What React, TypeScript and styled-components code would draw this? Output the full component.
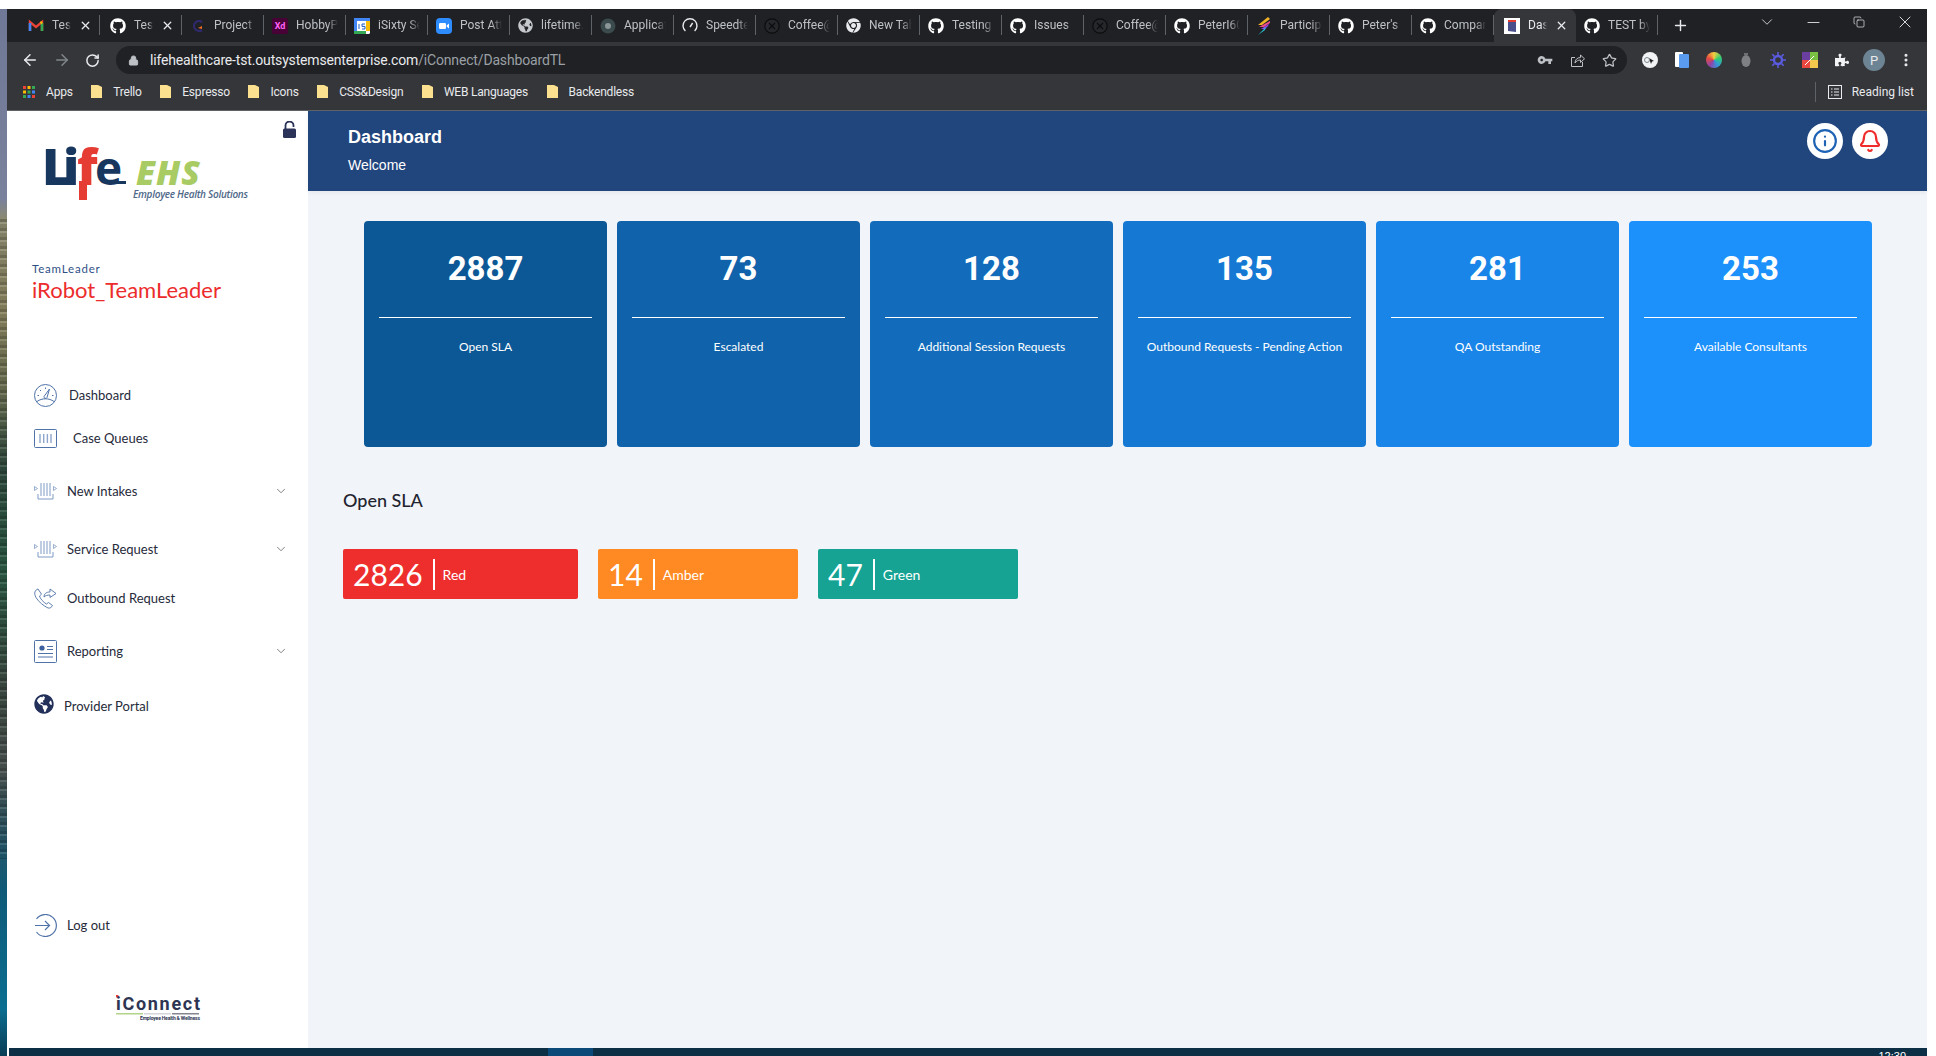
import React from "react";
import styled, { createGlobalStyle } from "styled-components";
import {
  ArrowLeft,
  ArrowRight,
  Bell,
  ChevronDown,
  Copy,
  Info,
  Lock,
  Minus,
  MoreVertical,
  Plus,
  RotateCw,
  Star,
  X,
} from "lucide-react";
import { FaChrome, FaGithub, FaGlobeAmericas, FaPuzzlePiece } from "react-icons/fa";
import { MdVpnKey } from "react-icons/md";

const ICON = "#4f72a8";

const tabs = [
  { title: "Test", icon: "gmail", close: true },
  { title: "Test", icon: "github", close: true },
  { title: "Project", icon: "project" },
  { title: "HobbyP", icon: "xd" },
  { title: "iSixty Se", icon: "calendar" },
  { title: "Post Att", icon: "zoom" },
  { title: "lifetime.", icon: "globe" },
  { title: "Applicat", icon: "app" },
  { title: "Speedte", icon: "speed" },
  { title: "Coffee@", icon: "coffee" },
  { title: "New Tab", icon: "chrome" },
  { title: "Testing", icon: "github" },
  { title: "Issues", icon: "github" },
  { title: "Coffee@", icon: "coffee" },
  { title: "PeterI60", icon: "github" },
  { title: "Participa", icon: "bolt" },
  { title: "Peter's", icon: "github" },
  { title: "Compar", icon: "github" },
  { title: "Dash", icon: "book", close: true, active: true },
  { title: "TEST by", icon: "github" },
];

const bookmarks = ["Trello", "Espresso", "Icons", "CSS&Design", "WEB Languages", "Backendless"];

const stats = [
  { value: "2887", label: "Open SLA", color: "#0c5896" },
  { value: "73", label: "Escalated", color: "#1062aa" },
  { value: "128", label: "Additional Session Requests", color: "#126cbb" },
  { value: "135", label: "Outbound Requests - Pending Action", color: "#1579d3" },
  { value: "281", label: "QA Outstanding", color: "#1a85e8" },
  { value: "253", label: "Available Consultants", color: "#1c90fb" },
];

const slas = [
  { value: "2826", label: "Red", color: "#ed2e2d", width: 235 },
  { value: "14", label: "Amber", color: "#ff8922", width: 200 },
  { value: "47", label: "Green", color: "#16a394", width: 200 },
];

const TabIcon = ({ kind }: { kind: string }) => {
  switch (kind) {
    case "github":
      return <FaGithub size={16} color="#fff" />;
    case "chrome":
      return <FaChrome size={15} color="#e8eaed" />;
    case "globe":
      return <FaGlobeAmericas size={15} color="#c4c7cb" />;
    case "gmail":
      return (
        <svg width="16" height="16" viewBox="0 0 16 16" fill="none">
          <path d="M2 13V4l6 5 6-5v9" stroke="#e94335" strokeWidth="2.4" />
          <path d="M2 13V5" stroke="#4285f4" strokeWidth="2.6" />
          <path d="M14 13V5" stroke="#34a853" strokeWidth="2.6" />
          <path d="M14 4l-1.5 1.2" stroke="#fbbc04" strokeWidth="2.4" />
        </svg>
      );
    case "project":
      return (
        <svg width="16" height="16" viewBox="0 0 16 16" fill="none">
          <path d="M12 4a5 5 0 1 0 0 8" stroke="#2f2a6e" strokeWidth="2.2" />
          <path d="M8 10l4-2v3z" fill="#f26b21" />
        </svg>
      );
    case "xd":
      return <XdMark>Xd</XdMark>;
    case "calendar":
      return (
        <svg width="16" height="16" viewBox="0 0 16 16">
          <rect width="16" height="16" rx="1.5" fill="#fff" />
          <path d="M0 0h16v3H0z" fill="#4285f4" />
          <path d="M0 13h12v3H0z" fill="#34a853" />
          <path d="M12 3h4v10h-4z" fill="#fbbc04" />
          <path d="M0 3h3v10H0z" fill="#4285f4" />
          <path d="M5 6v5M8 6h3M8 6v2.4h3V11H8" stroke="#1a5fc8" strokeWidth="1" fill="none" />
        </svg>
      );
    case "zoom":
      return (
        <svg width="16" height="16" viewBox="0 0 16 16">
          <rect width="16" height="16" rx="4" fill="#2d8cff" />
          <rect x="3" y="5" width="7" height="6" rx="1.2" fill="#fff" />
          <path d="M10.6 7.4L13 5.6v4.8l-2.4-1.8z" fill="#fff" />
        </svg>
      );
    case "app":
      return (
        <svg width="16" height="16" viewBox="0 0 16 16">
          <circle cx="8" cy="8" r="7.5" fill="#3b4a4c" />
          <circle cx="8" cy="8" r="3" fill="#8a9698" />
        </svg>
      );
    case "speed":
      return (
        <svg width="16" height="16" viewBox="0 0 16 16" fill="none" stroke="#e8eaed" strokeWidth="1.4">
          <path d="M3.4 13a7 7 0 1 1 9.2 0" />
          <path d="M8 9l2.6-4" />
        </svg>
      );
    case "coffee":
      return (
        <svg width="16" height="16" viewBox="0 0 16 16" fill="none" stroke="#0b0c0d" strokeWidth="1.2">
          <circle cx="8" cy="8" r="7.2" fill="#25272a" />
          <path d="M5 5l6 6M11 5l-6 6" stroke="#0b0c0d" />
        </svg>
      );
    case "bolt":
      return (
        <svg width="16" height="18" viewBox="0 0 16 18">
          <path d="M12 0L2 8h4l8-6z" fill="#f0b429" />
          <path d="M14 4L3 10h5l6-4z" fill="#ec4a8b" />
          <path d="M13 7L5 12h4l3-3z" fill="#8d4bf0" />
          <path d="M10 10L2 18l7-5z" fill="#27c4d8" />
        </svg>
      );
    case "book":
      return (
        <svg width="16" height="16" viewBox="0 0 16 16">
          <rect width="16" height="16" fill="#fff" />
          <path d="M4 2h8v2H4z" fill="#e53b33" />
          <path d="M4 4h8v10l-8-1z" fill="#4a4f8c" />
        </svg>
      );
    default:
      return null;
  }
};

const Logo = () => (
  <LogoSvg viewBox="0 0 210 56" aria-label="Life EHS">
    <rect x="33" y="34" width="8" height="19" fill="#e53d33" />
    <rect x="60" y="34" width="20" height="3" fill="#17375e" />
    <text x="-4" y="38" fontFamily="Open Sans" fontWeight="800" fontSize="50" fill="#17375e">
      L<tspan dx="-8">i</tspan>
      <tspan dx="-2.5" fill="#e53d33">f</tspan>
      <tspan dx="-2.5" fontWeight="700" fontSize="46">e</tspan>
    </text>
    <text x="90" y="38" fontFamily="Open Sans" fontWeight="800" fontStyle="italic" fontSize="34" fill="#a9cb63" textLength="64">EHS</text>
    <text x="87" y="51" fontFamily="Open Sans" fontWeight="600" fontStyle="italic" fontSize="10" fill="#4e6788" textLength="115">Employee Health Solutions</text>
  </LogoSvg>
);

const IConnectLogo = () => (
  <FooterLogo viewBox="0 0 86 26" aria-label="iConnect">
    <rect x="0" y="0" width="2.4" height="2.4" fill="#e53d33" />
    <text x="0" y="15" fontFamily="Roboto" fontWeight="700" fontSize="18" fill="#2d3553" textLength="84">iConnect</text>
    <rect x="0" y="18" width="27" height="1.5" fill="#b2d48a" />
    <rect x="28" y="18" width="27" height="1.5" fill="#d5d6dc" />
    <rect x="56" y="18" width="27" height="1.5" fill="#85868f" />
    <text x="24" y="24.5" fontFamily="Roboto" fontWeight="700" fontSize="5" fill="#2d3553" textLength="60">Employee Health &amp; Wellness</text>
  </FooterLogo>
);

const UnlockedIcon = () => (
  <svg width="13" height="17" viewBox="0 0 13 17" fill="none">
    <path d="M2.500 8V4.500a4 4 0 0 1 8 0V6" stroke="#2b3359" strokeWidth="1.800" />
    <rect x="0" y="7.500" width="13" height="9.500" rx="1.500" fill="#2b3359" />
  </svg>
);

const GaugeIcon = () => (
  <svg width="23" height="23" viewBox="0 0 23 23" fill="none" stroke={ICON} strokeWidth="1">
    <circle cx="11.5" cy="11.5" r="11" />
    <path d="M3 17.5c5-3.6 12-3.6 17 0" />
    <path d="M10 12.5L15.5 5l-2.5 8.5a1.6 1.6 0 0 1-3-1z" />
    <path d="M3.5 11.5h1.5M6 6l1 1M11.5 3.5V5M18 11.5h1.5" />
  </svg>
);

const QueueIcon = () => (
  <svg width="23" height="19" viewBox="0 0 23 19" fill="none" stroke={ICON}>
    <rect x="0.5" y="0.5" width="22" height="18" rx="1" />
    <path d="M6 5v9M9.7 5v9M13.4 5v9M17 5v9" stroke="#8ea6cb" strokeWidth="1.4" />
  </svg>
);

const IntakeIcon = () => (
  <svg width="23" height="17" viewBox="0 0 23 17" fill="none" stroke="#7f9bc5">
    <path d="M4 16h15M4 11v5M19 11v5" />
    <path d="M7 0v13M10 0v13M13 0v13M16 0v13" />
    <path d="M0.5 3.5v4l3-2zM19.5 3.5v4l3-2z" strokeWidth="0.8" />
  </svg>
);

const OutboundIcon = () => (
  <svg width="23" height="21" viewBox="0 0 23 21" fill="none" stroke={ICON} strokeWidth="0.9">
    <path d="M4 1C1 2-.5 5 2 9.500S10 18 14 20c2 .6 4-1 4.500-2.500l-4-3-2 1.500C9.500 14.500 6 10.500 5.500 8l2-1.800L4 1z" />
    <path d="M10 9c0-3 2-5 6-5V1l6 4.500-6 4V7c-2.500 0-4.500.5-6 2z" />
  </svg>
);

const ReportIcon = () => (
  <svg width="23" height="23" viewBox="0 0 23 23" fill="none" stroke={ICON}>
    <rect x="0.5" y="0.5" width="22" height="22" rx="1" />
    <circle cx="8" cy="8" r="2.6" fill="#3c5f9d" stroke="none" />
    <path d="M13 6.500h6M13 9.500h6M4 13.500h15M4 17h15" />
  </svg>
);

const LogoutIcon = () => (
  <svg width="23" height="23" viewBox="0 0 23 23" fill="none" stroke={ICON} strokeWidth="1.2">
    <path d="M2.500 5a11 11 0 1 1 0 13" />
    <path d="M1 11.500h14M11 7l4.500 4.500L11 16" />
  </svg>
);

const NavRow = ({
  icon,
  label,
  top,
  gap,
  expandable,
}: {
  icon: React.ReactNode;
  label: string;
  top: number;
  gap: number;
  expandable?: boolean;
}) => (
  <NavItem $top={top} $gap={gap}>
    {icon}
    <NavLabel>{label}</NavLabel>
    {expandable && <NavChevron size={14} strokeWidth={1.5} />}
  </NavItem>
);

const App = () => (
  <>
    <GlobalStyle />
    <Page>
      <Wallpaper />
      <Window>
        <TabStrip>
          {tabs.map((tab, i) => (
            <Tab key={i} $active={tab.active} $wide={tab.close}>
              <TabIcon kind={tab.icon} />
              <TabTitle $active={tab.active}>{tab.title}</TabTitle>
              {tab.close && <X size={13} strokeWidth={2.4} color="#e8eaed" />}
            </Tab>
          ))}
          <NewTab>
            <Plus size={17} strokeWidth={2} />
          </NewTab>
          <WindowControls>
            <WindowControl>
              <ChevronDown size={18} strokeWidth={1.1} />
            </WindowControl>
            <WindowControl>
              <Minus size={19} strokeWidth={1.1} />
            </WindowControl>
            <WindowControl>
              <Copy size={12} strokeWidth={1.4} />
            </WindowControl>
            <WindowControl>
              <X size={20} strokeWidth={1.1} />
            </WindowControl>
          </WindowControls>
        </TabStrip>

        <Toolbar>
          <NavButtons>
            <ArrowLeft size={18} color="#e8eaed" />
            <ArrowRight size={18} color="#80868b" />
            <RotateCw size={15} color="#e8eaed" strokeWidth={2.4} />
          </NavButtons>
          <Omnibox>
            <Lock size={11} color="#bdc1c6" fill="#bdc1c6" />
            <Url>
              lifehealthcare-tst.outsystemsenterprise.com<UrlPath>/iConnect/DashboardTL</UrlPath>
            </Url>
            <OmniActions>
              <MdVpnKey size={16} color="#bdc1c6" />
              <svg width="15" height="15" viewBox="0 0 15 15" fill="none" stroke="#bdc1c6">
                <path d="M12.500 9v4.500h-11v-9H5" />
                <path d="M5 10c0-3 2-5.500 5.500-5.500V2l4 3.800-4 3.700V7C8 7 6.500 8 5 10z" />
              </svg>
              <Star size={15} color="#bdc1c6" />
            </OmniActions>
          </Omnibox>
          <Extensions>
            <ExtSlot>
              <svg width="16" height="16" viewBox="0 0 16 16">
                <circle cx="8" cy="8" r="8" fill="#f1f3f4" />
                <path d="M7 6l5 3-2 .6L9 12z" fill="#202124" />
                <circle cx="5" cy="8" r="2.500" fill="none" stroke="#80868b" />
              </svg>
            </ExtSlot>
            <ExtSlot>
              <svg width="14" height="16" viewBox="0 0 14 16">
                <rect width="8" height="15" rx="1" fill="#fff" />
                <rect x="4" y="2" width="10" height="14" rx="1" fill="#5a9bf0" />
              </svg>
            </ExtSlot>
            <ExtSlot>
              <ExtWheel />
            </ExtSlot>
            <ExtSlot>
              <svg width="10" height="16" viewBox="0 0 10 16">
                <path d="M3 1h4v2H3z" fill="#6d6f73" />
                <ellipse cx="5" cy="9" rx="4.500" ry="6" fill="#7e8084" />
              </svg>
            </ExtSlot>
            <ExtSlot>
              <svg width="16" height="16" viewBox="0 0 16 16" stroke="#5a5be0" strokeWidth="1.6">
                <circle cx="8" cy="8" r="4" fill="none" strokeWidth="2.4" />
                <path d="M8 0v3M8 13v3M0 8h3M13 8h3M2.300 2.300l2.100 2.100M11.600 11.600l2.100 2.100M13.700 2.300l-2.100 2.100M4.400 11.600l-2.100 2.100" />
              </svg>
            </ExtSlot>
            <ExtSlot>
              <svg width="16" height="16" viewBox="0 0 16 16">
                <path d="M0 0h8v8H0z" fill="#6a3fa0" />
                <path d="M8 0h8v8H8z" fill="#7ac143" />
                <path d="M0 8h8v8H0z" fill="#e8483f" />
                <path d="M8 8h8v8H8z" fill="#f2c94c" />
                <path d="M3 13L12 4" stroke="#fff" />
              </svg>
            </ExtSlot>
            <ExtSlot>
              <FaPuzzlePiece size={14} color="#f1f3f4" />
            </ExtSlot>
            <ExtSlot>
              <Avatar>P</Avatar>
            </ExtSlot>
            <ExtSlot>
              <MoreVertical size={16} color="#e8eaed" strokeWidth={2.6} />
            </ExtSlot>
          </Extensions>
        </Toolbar>

        <BookmarkBar>
          <BookmarkItem $gap={11}>
            <svg width="12" height="12" viewBox="0 0 12 12">
              {[0, 4.5, 9].map((x, xi) =>
                [0, 4.5, 9].map((y, yi) => (
                  <rect
                    key={`${xi}-${yi}`}
                    x={x}
                    y={y}
                    width="3"
                    height="3"
                    fill={["#ea4335", "#fbbc04", "#34a853", "#4285f4"][(xi + yi) % 4]}
                  />
                )),
              )}
            </svg>
            Apps
          </BookmarkItem>
          {bookmarks.map((name) => (
            <BookmarkItem key={name} $gap={11}>
              <svg width="11" height="13" viewBox="0 0 11 13">
                <path d="M0 0h7l4 2v11H0z" fill="#fbe08f" />
              </svg>
              {name}
            </BookmarkItem>
          ))}
          <ReadingList>
            <svg width="14" height="14" viewBox="0 0 14 14" fill="none" stroke="#e8eaed">
              <rect x="0.5" y="0.5" width="13" height="13" />
              <path d="M3 4h1.500M6 4h5M3 7h1.500M6 7h5M3 10h1.500M6 10h5" strokeWidth="1.200" />
            </svg>
            Reading list
          </ReadingList>
        </BookmarkBar>

        <AppBody>
          <Sidebar>
            <LockRow>
              <UnlockedIcon />
            </LockRow>
            <Logo />
            <RoleText>TeamLeader</RoleText>
            <UserName>iRobot_TeamLeader</UserName>
            <Nav>
              <NavRow icon={<GaugeIcon />} label="Dashboard" top={79} gap={12} />
              <NavRow icon={<QueueIcon />} label="Case Queues" top={19} gap={16} />
              <NavRow icon={<IntakeIcon />} label="New Intakes" top={29} gap={10} expandable />
              <NavRow icon={<IntakeIcon />} label="Service Request" top={34} gap={10} expandable />
              <NavRow icon={<OutboundIcon />} label="Outbound Request" top={25} gap={10} />
              <NavRow icon={<ReportIcon />} label="Reporting" top={29} gap={10} expandable />
              <NavRow icon={<GlobeIcon size={20} />} label="Provider Portal" top={31} gap={10} />
              <NavRow icon={<LogoutIcon />} label="Log out" top={195} gap={10} />
            </Nav>
            <IConnectLogo />
          </Sidebar>

          <Main>
            <Header>
              <HeaderText>
                <HeaderTitle>Dashboard</HeaderTitle>
                <HeaderSub>Welcome</HeaderSub>
              </HeaderText>
              <HeaderActions>
                <RoundButton>
                  <Info size={26} color="#1f63b5" strokeWidth={2} />
                </RoundButton>
                <RoundButton>
                  <Bell size={24} color="#ef2b2b" strokeWidth={2.2} />
                </RoundButton>
              </HeaderActions>
            </Header>

            <CardRow>
              {stats.map((stat) => (
                <StatCard key={stat.label} $color={stat.color}>
                  <StatValue>{stat.value}</StatValue>
                  <StatLabel>{stat.label}</StatLabel>
                </StatCard>
              ))}
            </CardRow>

            <SectionTitle>Open SLA</SectionTitle>
            <SlaRow>
              {slas.map((sla) => (
                <SlaPill key={sla.label} $color={sla.color} $width={sla.width}>
                  <SlaValue>{sla.value}</SlaValue>
                  <SlaLabel>{sla.label}</SlaLabel>
                </SlaPill>
              ))}
            </SlaRow>
          </Main>
        </AppBody>

        <Taskbar>
          <TaskHighlight />
          <Clock>12:30</Clock>
        </Taskbar>
      </Window>
    </Page>
  </>
);

export default App;

const GlobalStyle = createGlobalStyle`
  html, body {
    margin: 0;
    padding: 0;
    background: #fff;
    overflow: hidden;
  }
  * {
    box-sizing: border-box;
  }
`;

const Page = styled.div`
  display: flex;
  width: 1936px;
  height: 1056px;
  padding: 9px 9px 0 0;
  overflow: hidden;
  font-family: "Lato", sans-serif;
`;

const Wallpaper = styled.div`
  width: 7px;
  flex: none;
  background:
    repeating-linear-gradient(
        180deg,
        rgba(0, 0, 0, 0.22) 0 3px,
        rgba(255, 255, 255, 0.1) 3px 5px,
        rgba(0, 0, 0, 0.08) 5px 9px
      )
      0 210px / 100% 640px no-repeat,
    linear-gradient(
      180deg,
      #6f7896 0,
      #79819c 190px,
      #8b8a70 210px,
      #8a8460 300px,
      #6b6f52 380px,
      #2f4a3e 460px,
      #2b5a44 560px,
      #3c4a42 680px,
      #4b5350 760px,
      #0f5a78 880px,
      #0b6e90 1000px,
      #0a3c55 1047px
    );
`;

const Window = styled.div`
  width: 1920px;
  display: flex;
  flex-direction: column;
`;

const TabStrip = styled.div`
  height: 33px;
  display: flex;
  align-items: flex-end;
  padding-left: 11px;
  background: #202124;
  font-family: "Roboto", sans-serif;
`;

const Tab = styled.div<{ $active?: boolean; $wide?: boolean }>`
  position: relative;
  width: 82px;
  height: 33px;
  flex: none;
  display: flex;
  align-items: center;
  gap: 8px;
  padding: 0 8px 0 ${(p) => (p.$wide ? 10 : 8)}px;
  border-radius: 8px 8px 0 0;
  background: ${(p) => (p.$active ? "#35363a" : "transparent")};

  &::after {
    content: "";
    position: absolute;
    right: 0;
    top: 6px;
    height: 20px;
    width: 1px;
    background: ${(p) => (p.$active ? "transparent" : "#5f6368")};
  }
`;

const TabTitle = styled.span<{ $active?: boolean }>`
  flex: 1;
  min-width: 0;
  overflow: hidden;
  white-space: nowrap;
  font-size: 12px;
  line-height: 15px;
  margin-top: -1px;
  color: ${(p) => (p.$active ? "#e8eaed" : "#bdc1c6")};
  -webkit-mask-image: linear-gradient(90deg, #000 75%, transparent 100%);
  mask-image: linear-gradient(90deg, #000 75%, transparent 100%);
`;

const XdMark = styled.span`
  width: 16px;
  height: 16px;
  flex: none;
  display: flex;
  align-items: center;
  justify-content: center;
  border-radius: 2px;
  background: #470137;
  color: #ff61f6;
  font-size: 9px;
  font-weight: 700;
`;

const NewTab = styled.div`
  display: flex;
  align-items: center;
  height: 33px;
  margin-left: 14px;
  color: #e8eaed;
`;

const WindowControls = styled.div`
  display: flex;
  align-items: center;
  height: 26px;
  align-self: flex-start;
  margin-left: auto;
  margin-right: -1px;
  color: #e8eaed;
`;

const WindowControl = styled.span`
  width: 46px;
  display: flex;
  justify-content: center;
`;

const Toolbar = styled.div`
  height: 35px;
  display: flex;
  align-items: flex-start;
  padding-top: 4px;
  background: #35363a;
  font-family: "Roboto", sans-serif;
`;

const NavButtons = styled.div`
  width: 109px;
  height: 28px;
  flex: none;
  display: flex;
  align-items: center;
  gap: 14px;
  padding-left: 14px;
`;

const Omnibox = styled.div`
  width: 1511px;
  height: 28px;
  flex: none;
  display: flex;
  align-items: center;
  gap: 11px;
  padding: 0 10px 0 12px;
  border-radius: 14px;
  background: #202124;
`;

const Url = styled.span`
  font-size: 14px;
  letter-spacing: -0.16px;
  color: #e8eaed;
  white-space: nowrap;
`;

const UrlPath = styled.span`
  color: #9aa0a6;
`;

const OmniActions = styled.div`
  display: flex;
  align-items: center;
  gap: 17px;
  margin-left: auto;
`;

const Extensions = styled.div`
  flex: 1;
  height: 28px;
  display: flex;
  align-items: center;
  padding-left: 7px;
`;

const ExtSlot = styled.span`
  width: 32px;
  display: flex;
  justify-content: center;
`;

const ExtWheel = styled.div`
  width: 16px;
  height: 16px;
  border-radius: 50%;
  background: conic-gradient(#f4d03f, #2ecc71, #3498db, #8e44ad, #e74c3c, #f4d03f);
`;

const Avatar = styled.div`
  width: 22px;
  height: 22px;
  display: flex;
  align-items: center;
  justify-content: center;
  border-radius: 50%;
  background: #6d8494;
  color: #e8eaed;
  font-size: 13px;
`;

const BookmarkBar = styled.div`
  height: 34px;
  display: flex;
  align-items: center;
  gap: 18.5px;
  padding: 0 13px 4px 16px;
  border-bottom: 1px solid #5f6368;
  background: #35363a;
  font-family: "Roboto", sans-serif;
`;

const BookmarkItem = styled.div<{ $gap: number }>`
  display: flex;
  align-items: center;
  gap: ${(p) => p.$gap}px;
  font-size: 12px;
  letter-spacing: -0.2px;
  color: #e8eaed;
`;

const ReadingList = styled.div`
  display: flex;
  align-items: center;
  gap: 10px;
  height: 20px;
  margin-left: auto;
  padding-left: 12px;
  border-left: 1px solid #5f6368;
  font-size: 12px;
  color: #e8eaed;
`;

const AppBody = styled.div`
  flex: 1;
  min-height: 0;
  display: flex;
`;

const Sidebar = styled.aside`
  width: 301px;
  flex: none;
  padding: 10px 12px 0 25px;
  background: #fff;
`;

const LockRow = styled.div`
  height: 17px;
  display: flex;
  justify-content: flex-end;
`;

const LogoSvg = styled.svg`
  display: block;
  width: 210px;
  height: 56px;
  margin: 9px 0 0 14px;
  overflow: visible;
`;

const RoleText = styled.div`
  margin-top: 59px;
  font-size: 11.5px;
  line-height: 14px;
  letter-spacing: 0.8px;
  color: #2f4f86;
`;

const UserName = styled.div`
  margin-top: 0;
  font-size: 22px;
  line-height: 28px;
  color: #ec2c2c;
`;

const Nav = styled.nav`
  padding: 0 8px 0 2px;
`;

const NavItem = styled.div<{ $top: number; $gap: number }>`
  height: 24px;
  display: flex;
  align-items: center;
  gap: ${(p) => p.$gap}px;
  margin-top: ${(p) => p.$top}px;
`;

const NavLabel = styled.span`
  font-size: 13px;
  color: #262a3a;
`;

const NavChevron = styled(ChevronDown)`
  margin-left: auto;
  color: #6f6f6f;
`;

const GlobeIcon = styled(FaGlobeAmericas)`
  color: #22305a;
  margin-top: -4px;
`;

const FooterLogo = styled.svg`
  display: block;
  width: 86px;
  height: 26px;
  margin: 58px 0 0 84px;
`;

const Main = styled.main`
  flex: 1;
  min-width: 0;
  background: #f1f5f9;
`;

const Header = styled.header`
  height: 80px;
  display: flex;
  align-items: center;
  justify-content: space-between;
  padding: 0 39px 2px 40px;
  background: #21457d;
  box-shadow: 0 2px 4px rgba(0, 0, 0, 0.05);
  font-family: "Liberation Sans", Arial, sans-serif;
  color: #fff;
`;

const HeaderText = styled.div`
  display: flex;
  flex-direction: column;
  gap: 8px;
`;

const HeaderTitle = styled.div`
  font-size: 18px;
  line-height: 22px;
  font-weight: 700;
`;

const HeaderSub = styled.div`
  font-size: 14px;
  line-height: 18px;
`;

const HeaderActions = styled.div`
  display: flex;
  gap: 9px;
  margin-bottom: 18px;
`;

const RoundButton = styled.div`
  width: 36px;
  height: 36px;
  display: flex;
  align-items: center;
  justify-content: center;
  border-radius: 50%;
  background: #fff;
`;

const CardRow = styled.div`
  display: flex;
  gap: 10px;
  margin: 30px 0 0 56px;
`;

const StatCard = styled.div<{ $color: string }>`
  width: 243px;
  height: 226px;
  padding: 0 15px;
  border-radius: 4px;
  background: ${(p) => p.$color};
  color: #fff;
  text-align: center;
`;

const StatValue = styled.div`
  height: 97px;
  padding-top: 27px;
  border-bottom: 1px solid #fff;
  font-family: "Roboto", sans-serif;
  font-size: 33px;
  line-height: 42px;
  font-weight: 700;
`;

const StatLabel = styled.div`
  margin-top: 20px;
  font-size: 12px;
  line-height: 18px;
`;

const SectionTitle = styled.h2`
  margin: 42px 0 0 35px;
  font-size: 18px;
  line-height: 22px;
  font-weight: 500;
  color: #1f2430;
`;

const SlaRow = styled.div`
  display: flex;
  gap: 20px;
  margin: 38px 0 0 35px;
`;

const SlaPill = styled.div<{ $color: string; $width: number }>`
  width: ${(p) => p.$width}px;
  height: 50px;
  display: flex;
  align-items: center;
  padding-left: 10px;
  border-radius: 2px;
  background: ${(p) => p.$color};
  color: #fff;
`;

const SlaValue = styled.span`
  height: 31px;
  padding-right: 10px;
  border-right: 2px solid #fff;
  font-size: 30px;
  line-height: 31px;
`;

const SlaLabel = styled.span`
  margin-left: 8px;
  font-size: 14px;
`;

const Taskbar = styled.div`
  position: relative;
  height: 8px;
  flex: none;
  margin-left: 2px;
  background: #0c2f45;
  overflow: hidden;
`;

const TaskHighlight = styled.div`
  position: absolute;
  left: 539px;
  top: 0;
  width: 45px;
  height: 8px;
  background: #0b4a78;
`;

const Clock = styled.span`
  position: absolute;
  right: 21px;
  top: 2px;
  font-family: "Liberation Sans", sans-serif;
  font-size: 11px;
  line-height: 13px;
  color: #fff;
`;
